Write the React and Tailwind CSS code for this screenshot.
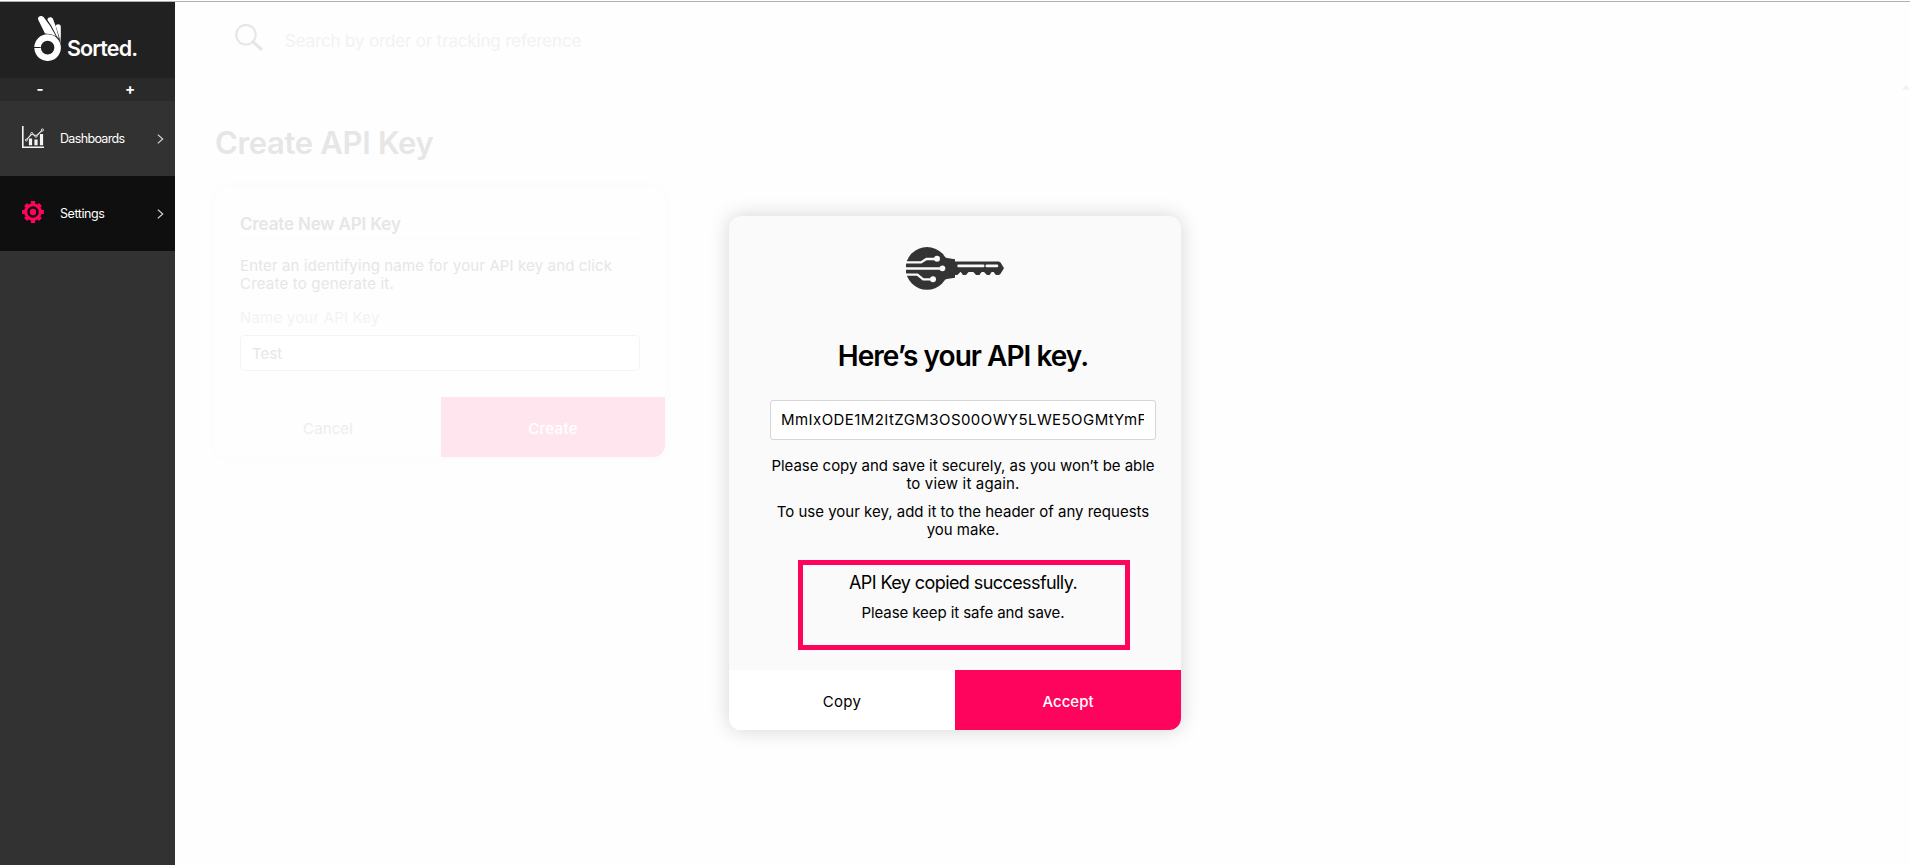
function Logo() {
  return (
    <svg width="28" height="46" viewBox="0 0 28 46" fill="#fff" className="shrink-0">
      <path d="M4.1 3.4C3.3 -.2 8.2 -1 9.9 1.6L16 9.8 21.8 20Q17.2 17.4 11 17.5Z" />
      <path d="M13.5 4C13 .6 18.2 .2 19 3L21.8 10.4 25 22.8 22.8 20.2 17 9.2Z" />
      <path d="M21.6 10.6C21.6 7.4 26.6 7.4 26.8 10.6V20L26.3 28 25.6 22 22.3 11.6Z" />
      <path
        fillRule="evenodd"
        d="M13.6 18.2A13.3 13.3 0 0 0 .3 31.1H6.6V32.1H.3A13.3 13.3 0 1 0 24.6 24.2L21.6 20.7 18.2 18.9ZM13.6 24.8A6.8 6.8 0 1 1 13.6 38.4A6.8 6.8 0 1 1 13.6 24.8Z"
      />
    </svg>
  );
}

function ChartIcon() {
  return (
    <svg width="22" height="22" viewBox="0 0 22 22" fill="none" stroke="#f5f5f5">
      <path d="M.8 0V21.2H22" strokeWidth="1.6" />
      <path d="M4.4 14L9.8 7.8L14 10.2L20.4 4.2" strokeWidth="1.1" />
      <g fill="#323232" strokeWidth=".9">
        <circle cx="4.4" cy="14" r="1" />
        <circle cx="9.8" cy="7.6" r="1.1" />
        <circle cx="14" cy="10.2" r="1.1" />
        <circle cx="20.4" cy="4" r="1.1" />
      </g>
      <path d="M8.5 12.4V19.2M14 13.4V19.2M19.5 8V19.2" strokeWidth="3.2" />
    </svg>
  );
}

function GearIcon() {
  return (
    <svg width="22" height="22" viewBox="0 0 22 22" fill="none" stroke="#ff045c">
      <circle cx="11" cy="11" r="7.3" strokeWidth="3" />
      <circle cx="11" cy="11" r="3.2" fill="#ff045c" stroke="none" />
      <path
        d="M11 .1V3.4M11 18.6V21.9M.1 11H3.4M18.6 11H21.9M3.6 3.6L5.2 5.2M16.8 16.8L18.4 18.4M18.4 3.6L16.8 5.2M5.2 16.8L3.6 18.4"
        strokeWidth="4.2"
      />
    </svg>
  );
}

function Chevron() {
  return (
    <svg width="7" height="10" viewBox="0 0 7 10" fill="none" stroke="#d6d6d6" strokeWidth="1.2">
      <path d="M.8 .6L5.7 5L.8 9.4" />
    </svg>
  );
}

function SearchIcon() {
  return (
    <svg width="28" height="27" viewBox="0 0 28 27" fill="none" stroke="#e6e6e6">
      <circle cx="11" cy="10.8" r="9.8" strokeWidth="2" />
      <path d="M18 17.8L26 25" strokeWidth="3.2" strokeLinecap="round" />
    </svg>
  );
}

function KeyIcon() {
  return (
    <svg width="98" height="43" viewBox="0 0 98 43">
      <g fill="#333">
        <circle cx="21" cy="21.4" r="21.4" />
        <path d="M36 9.5L41 11 49 12.2V14.6H92.6L94.6 15.6 98 21.2 94 27.6 92 28H90L87.6 25H85.6L83.6 28H81L78 25H75.6L73.4 28H70L67.4 25H62.6L60 28H57L54.6 24.8 51.4 28H49V30.8L41 32 36 33.5Z" />
      </g>
      <path d="M52.6 18.9H77.2M80.8 18.9H91" stroke="#fafafa" strokeWidth="2.6" strokeLinecap="round" fill="none" />
      <g stroke="#fafafa" strokeWidth="2.3" fill="none">
        <path d="M-1 15.4H15L20.4 12H30" />
        <path d="M-1 21.5H36" strokeWidth="2.7" />
        <path d="M-1 27.6H11.4L17.2 32.4H26" />
      </g>
      <g fill="#fafafa">
        <circle cx="31" cy="11.8" r="3" />
        <circle cx="36.4" cy="21.3" r="2.9" />
        <circle cx="27" cy="32.2" r="3" />
      </g>
    </svg>
  );
}

function NavItem({ icon, label, className }) {
  return (
    <a className={`flex h-[75px] items-center pr-[11px] pl-[22px] ${className}`}>
      <span className="pb-[3px]">{icon}</span>
      <span className="ml-4 flex-1 text-[12.5px] leading-4 text-white">{label}</span>
      <Chevron />
    </a>
  );
}

function Sidebar() {
  return (
    <aside className="flex w-[175px] shrink-0 flex-col bg-[#323232]">
      <div className="flex h-[76px] bg-[#212121] pt-3.5 pl-[34px]">
        <Logo />
        <span className="ml-[5px] pt-5 text-[21.5px] leading-6 font-semibold tracking-[-0.88px] text-white">Sorted.</span>
      </div>
      <div className="flex h-[23px] items-center bg-[#2a2a2a] pb-0.5 text-[15px] leading-none font-bold text-white">
        <span className="ml-[36px] w-2 text-center">-</span>
        <span className="ml-[81px] w-[10px] text-center">+</span>
      </div>
      <NavItem icon={<ChartIcon />} label="Dashboards" className="bg-[#323232] tracking-[-0.66px]" />
      <NavItem icon={<GearIcon />} label="Settings" className="bg-[#0f0f0f] tracking-[-0.42px]" />
    </aside>
  );
}

function CreateCard() {
  return (
    <section className="mt-[15px] flex h-[270px] w-[450px] flex-col overflow-hidden rounded-xl bg-[#fefefe] shadow-[0_0_14px_rgba(0,0,0,0.02)]">
      <div className="flex-1 px-[25px] pt-6 text-[15px] leading-[18px] text-[#e6e6e8]">
        <h2 className="h-7 border-b border-[#fbfbfb] pt-px text-[17px] leading-6 font-semibold tracking-[-0.16px] text-[#e6e6e6]">
          Create New API Key
        </h2>
        <p className="mt-[18px] tracking-[0.13px]">
          Enter an identifying name for your API key and click
          <br />
          <span className="tracking-[0.2px]">Create to generate it.</span>
        </p>
        <label className="mt-4 block tracking-[0.2px] text-[#f3f3f3]">Name your API Key</label>
        <div className="mt-2 flex h-9 items-center rounded-sm border border-[#f4f4f4] bg-white px-[11px] pt-0.5">Test</div>
      </div>
      <div className="flex h-[60px] text-[15px]">
        <button className="w-[226px] pt-1 tracking-[0.1px] text-[#ededed]">Cancel</button>
        <button className="flex-1 bg-[#ffe6ee] pt-1 font-medium tracking-[0.3px] text-white">Create</button>
      </div>
    </section>
  );
}

function Modal() {
  return (
    <div className="absolute top-[216px] left-[729px] flex h-[514px] w-[452px] flex-col overflow-hidden rounded-xl bg-[#fafafa] text-[15px] leading-[18px] text-black shadow-[0_0_20px_rgba(0,0,0,0.17)]">
      <div className="flex justify-center pt-[31px] pr-px">
        <KeyIcon />
      </div>
      <div className="flex flex-1 flex-col pr-[25px] pl-[41px] text-center">
        <h2 className="mt-[46px] text-[28px] leading-10 font-semibold tracking-[-0.97px]">Here’s your API key.</h2>
        <div className="mt-6 flex h-10 items-center rounded-[3px] border border-[#d6d6d6] bg-white pr-[11px] pl-2.5">
          <div className="overflow-hidden whitespace-nowrap tracking-[0.43px]">
            MmIxODE1M2ItZGM3OS00OWY5LWE5OGMtYmF
          </div>
        </div>
        <p className="mt-4 pt-px tracking-[-0.04px]">
          Please copy and save it securely, as you won’t be able
          <br />
          <span className="tracking-[0.15px]">to view it again.</span>
        </p>
        <p className="mt-2.5">
          To use your key, add it to the header of any requests
          <br />
          you make.
        </p>
        <div className="mt-[21px] ml-7 flex h-[90px] w-[332px] flex-col border-5 border-[#ff045c] pt-1.5 pr-0.5">
          <p className="text-[18px] leading-6 tracking-[-0.58px]">API Key copied successfully.</p>
          <p className="mt-[9px] tracking-[-0.08px]">Please keep it safe and save.</p>
        </div>
      </div>
      <div className="flex h-[60px]">
        <button className="w-1/2 bg-white pt-[3px] tracking-[0.25px]">Copy</button>
        <button className="w-1/2 bg-[#ff045c] pt-[3px] font-medium text-white">Accept</button>
      </div>
    </div>
  );
}

export default function App() {
  return (
    <div className="relative flex h-[865px] w-[1910px] flex-col overflow-hidden bg-[#fefefe] font-['Inter','Liberation_Sans',sans-serif]">
      <div className="h-0.5 shrink-0 border-b border-[#b0b0b0] bg-white" />
      <div className="flex flex-1">
        <Sidebar />
        <main className="flex-1 pl-10">
          <header className="flex h-[76px] pt-[22px] pl-5">
            <SearchIcon />
            <span className="ml-[22px] pt-[5px] text-[17px] leading-6 tracking-[-0.16px] text-[#f2f2f2]">
              Search by order or tracking reference
            </span>
          </header>
          <h1 className="mt-[44px] h-[50px] text-[31px] leading-[42px] font-semibold tracking-[-0.34px] text-[#e6e6e6]">Create API Key</h1>
          <CreateCard />
        </main>
        <svg width="8" height="5" viewBox="0 0 8 5" className="mt-[83px] shrink-0" fill="#f1f1f1">
          <path d="M0 4.5L4 0L8 4.5Z" />
        </svg>
      </div>
      <Modal />
    </div>
  );
}
